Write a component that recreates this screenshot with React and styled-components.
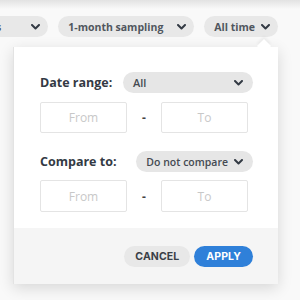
import React from 'react'
import styled, { createGlobalStyle, css } from 'styled-components'

const GlobalStyle = createGlobalStyle`
    html, body {
        margin: 0;
        padding: 0;
        background: #f9f9f9;
        font-family: 'Open Sans', 'Liberation Sans', sans-serif;
    }
`

const Page = styled.div`
    width: 300px;
    height: 300px;
    overflow: hidden;
    background: linear-gradient(#e2e2e2 0px, #f9f9f9 9px);
`

const Filters = styled.div`
    display: flex;
    justify-content: flex-end;
    gap: 10px;
    padding: 16px 22px 0 0;
`

const PillWrap = styled.div`
    position: relative;
    flex-shrink: 0;
`

const Pill = styled.button`
    display: flex;
    align-items: center;
    gap: ${props => props.gap || 8}px;
    height: 21px;
    padding: 0 8px 0 10px;
    border: none;
    border-radius: 11px;
    background: #e8e8e8;
    color: #50565e;
    font-family: 'Open Sans', sans-serif;
    font-size: 10.5px;
    font-weight: 700;
    white-space: nowrap;
`

const Chevron = ({ color = '#333a44' }) => (
    <svg width="9" height="6" viewBox="0 0 9 6">
        <path d="M1 1l3.5 3.5L8 1" fill="none" stroke={color} strokeWidth="2" strokeLinecap="round" strokeLinejoin="round" />
    </svg>
)

const Popover = styled.div`
    position: absolute;
    top: 31px;
    right: 0;
    width: 265px;
    background: #fff;
    border-left: 1px solid #e3e3e3;
    box-sizing: border-box;
    box-shadow: 0 4px 14px rgba(0, 0, 0, 0.14);
    z-index: 2;

    &::before {
        content: '';
        position: absolute;
        top: -6px;
        right: 9px;
        width: 10px;
        height: 10px;
        background: #fff;
        transform: rotate(45deg);
        box-shadow: -2px -2px 3px rgba(0, 0, 0, 0.05);
    }
`

const Body = styled.div`
    position: relative;
    padding: 25px 25px 16px 26px;
    background: #fff;
`

const Row = styled.div`
    display: flex;
    align-items: center;
    justify-content: space-between;
    height: 21px;
    margin-top: ${props => props.top || 0}px;
`

const Label = styled.span`
    font-size: 12.5px;
    font-weight: 700;
    color: #333a44;
`

const Select = styled.div`
    display: flex;
    align-items: center;
    justify-content: space-between;
    gap: 6px;
    height: 21px;
    padding: 0 10px 0 10px;
    box-sizing: border-box;
    border-radius: 11px;
    background: #e6e6e6;
    color: #444a52;
    font-size: ${props => props.small ? 10.5 : 11}px;
    font-weight: 600;
    ${props => props.width && css`
        width: ${props.width}px;
    `}
`

const Range = styled.div`
    display: flex;
    align-items: center;
    margin-top: ${props => props.top || 9}px;
    width: 208px;
`

const DateInput = styled.input`
    width: 87px;
    height: ${props => props.h || 31}px;
    box-sizing: border-box;
    border: 1px solid #e4e4e4;
    border-radius: 2px;
    background: #fff;
    text-align: center;
    font-family: 'Open Sans', sans-serif;
    font-size: 12px;
    outline: none;

    &::placeholder {
        color: #c8c8c8;
    }
`

const Dash = styled.span`
    width: 34px;
    text-align: center;
    font-size: 12px;
    font-weight: 700;
    color: #444;
`

const Footer = styled.div`
    display: flex;
    justify-content: flex-end;
    gap: 4px;
    height: 56px;
    box-sizing: border-box;
    padding: 18px 25px 0 0;
    background: #f5f5f5;
`

const Button = styled.button`
    height: 21px;
    border: none;
    border-radius: 11px;
    padding: 0 ${props => props.primary ? 12 : 11}px;
    font-family: 'Inter', 'Liberation Sans', sans-serif;
    font-size: 10.5px;
    font-weight: 700;
    letter-spacing: 0.1px;
    background: #e8e8e8;
    color: #3a3f47;
    ${props => props.primary && css`
        background: #2f80d9;
        color: #fff;
    `}
`

function App() {
    return (
        <>
            <GlobalStyle />
            <Page>
                <Filters>
                    <PillWrap>
                        <Pill gap={30}>All categories<Chevron /></Pill>
                    </PillWrap>
                    <PillWrap>
                        <Pill gap={14}>1-month sampling<Chevron /></Pill>
                    </PillWrap>
                    <PillWrap>
                        <Pill gap={6}>All time<Chevron /></Pill>
                        <Popover>
                            <Body>
                                <Row>
                                    <Label>Date range:</Label>
                                    <Select width={130}>All<Chevron /></Select>
                                </Row>
                                <Range>
                                    <DateInput placeholder="From" />
                                    <Dash>-</Dash>
                                    <DateInput placeholder="To" />
                                </Range>
                                <Row top={18}>
                                    <Label>Compare to:</Label>
                                    <Select small>Do not compare<Chevron /></Select>
                                </Row>
                                <Range top={8}>
                                    <DateInput placeholder="From" h={32} />
                                    <Dash>-</Dash>
                                    <DateInput placeholder="To" h={32} />
                                </Range>
                            </Body>
                            <Footer>
                                <Button>CANCEL</Button>
                                <Button primary>APPLY</Button>
                            </Footer>
                        </Popover>
                    </PillWrap>
                </Filters>
            </Page>
        </>
    )
}

export default App
